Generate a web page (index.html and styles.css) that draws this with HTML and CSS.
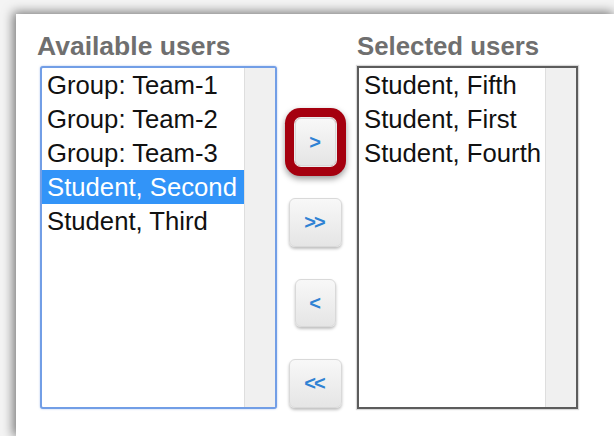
FILE: index.html
```html
<!DOCTYPE html>
<html lang="en">
<head>
<meta charset="utf-8">
<title>Manage group members</title>
<link rel="stylesheet" href="styles.css">
</head>
<body>
<div class="panel">
  <div class="picker">
    <div class="col col-left">
      <h2 class="col-title">Available users</h2>
      <div class="listbox listbox-focus">
        <ul class="options">
          <li>Group: Team-1</li>
          <li>Group: Team-2</li>
          <li>Group: Team-3</li>
          <li class="selected">Student, Second</li>
          <li>Student, Third</li>
        </ul>
        <div class="track"></div>
      </div>
    </div>
    <div class="col-buttons">
      <button class="move-btn narrow highlighted" type="button">&gt;</button>
      <button class="move-btn wide" type="button">&gt;&gt;</button>
      <button class="move-btn narrow" type="button">&lt;</button>
      <button class="move-btn wide" type="button">&lt;&lt;</button>
    </div>
    <div class="col col-right">
      <h2 class="col-title">Selected users</h2>
      <div class="listbox listbox-plain">
        <ul class="options">
          <li>Student, Fifth</li>
          <li>Student, First</li>
          <li>Student, Fourth</li>
        </ul>
        <div class="track"></div>
      </div>
    </div>
  </div>
</div>
</body>
</html>
```

FILE: styles.css
```css
html, body {
  margin: 0;
  padding: 0;
  height: 100%;
  overflow: hidden;
  background: #f4f4f4;
  font-family: "Liberation Sans", Arial, sans-serif;
}

.panel {
  margin: 14px 0 0 16px;
  width: 598px;
  height: 422px;
  background: #ffffff;
  box-shadow: -2px -1px 10px 1px rgba(0, 0, 0, 0.5);
  padding: 17px 0 0 21px;
  box-sizing: border-box;
}

.picker {
  display: flex;
  align-items: flex-start;
}

.col-left {
  width: 240px;
}

.col-right {
  width: 221px;
}

.col-title {
  margin: 0 0 5px;
  font-size: 26.5px;
  line-height: 30px;
  font-weight: bold;
  color: #6f6f6f;
  white-space: nowrap;
}

.col-right .col-title {
  font-size: 25.8px;
}

.listbox {
  display: flex;
  height: 343px;
  box-sizing: border-box;
  background: #ffffff;
}

.listbox-focus {
  margin-left: 3px;
  width: 237px;
  border: 2px solid #729ee6;
  border-radius: 3px;
  box-shadow: 0 0 2px rgba(80, 130, 220, 0.5);
}

.listbox-plain {
  width: 221px;
  border: 2px solid #5c5c5c;
  box-shadow: 0 0 1px 1px rgba(0, 0, 0, 0.15);
}

.options {
  flex: 1;
  list-style: none;
  margin: 0;
  padding: 0;
  font-size: 25.7px;
  line-height: 34px;
  color: #111111;
  white-space: nowrap;
  overflow: hidden;
}

.options li {
  padding-left: 5px;
}

.options li.selected {
  background: #3294f8;
  color: #ffffff;
}

.track {
  width: 30px;
  flex: none;
  background: #f0f0f0;
  border-left: 1px solid #dedede;
}

.col-buttons {
  width: 80px;
  padding: 87px 4px 0 0;
  box-sizing: border-box;
  display: flex;
  flex-direction: column;
  align-items: center;
  gap: 32px;
}

.move-btn {
  height: 48px;
  padding: 0;
  border: 1px solid #d9d9d9;
  border-radius: 6px;
  background: linear-gradient(#f8f8f8, #e5e5e5);
  box-shadow: 0 2px 3px rgba(0, 0, 0, 0.25);
  font-family: "Liberation Sans", Arial, sans-serif;
  font-size: 20px;
  font-weight: bold;
  color: #2f82d4;
  letter-spacing: -2px;
  text-indent: -2px;
}

.move-btn.narrow {
  width: 41px;
  letter-spacing: 0;
  text-indent: 0;
}

.move-btn.wide {
  width: 53px;
  height: 49px;
}

/* red call-out ring drawn round the "add" button */
.move-btn.highlighted {
  box-shadow:
    0 0 0 1px #ececec,
    0 0 0 10px #a5000f,
    0 3px 6px 10px rgba(0, 0, 0, 0.4);
}
```
